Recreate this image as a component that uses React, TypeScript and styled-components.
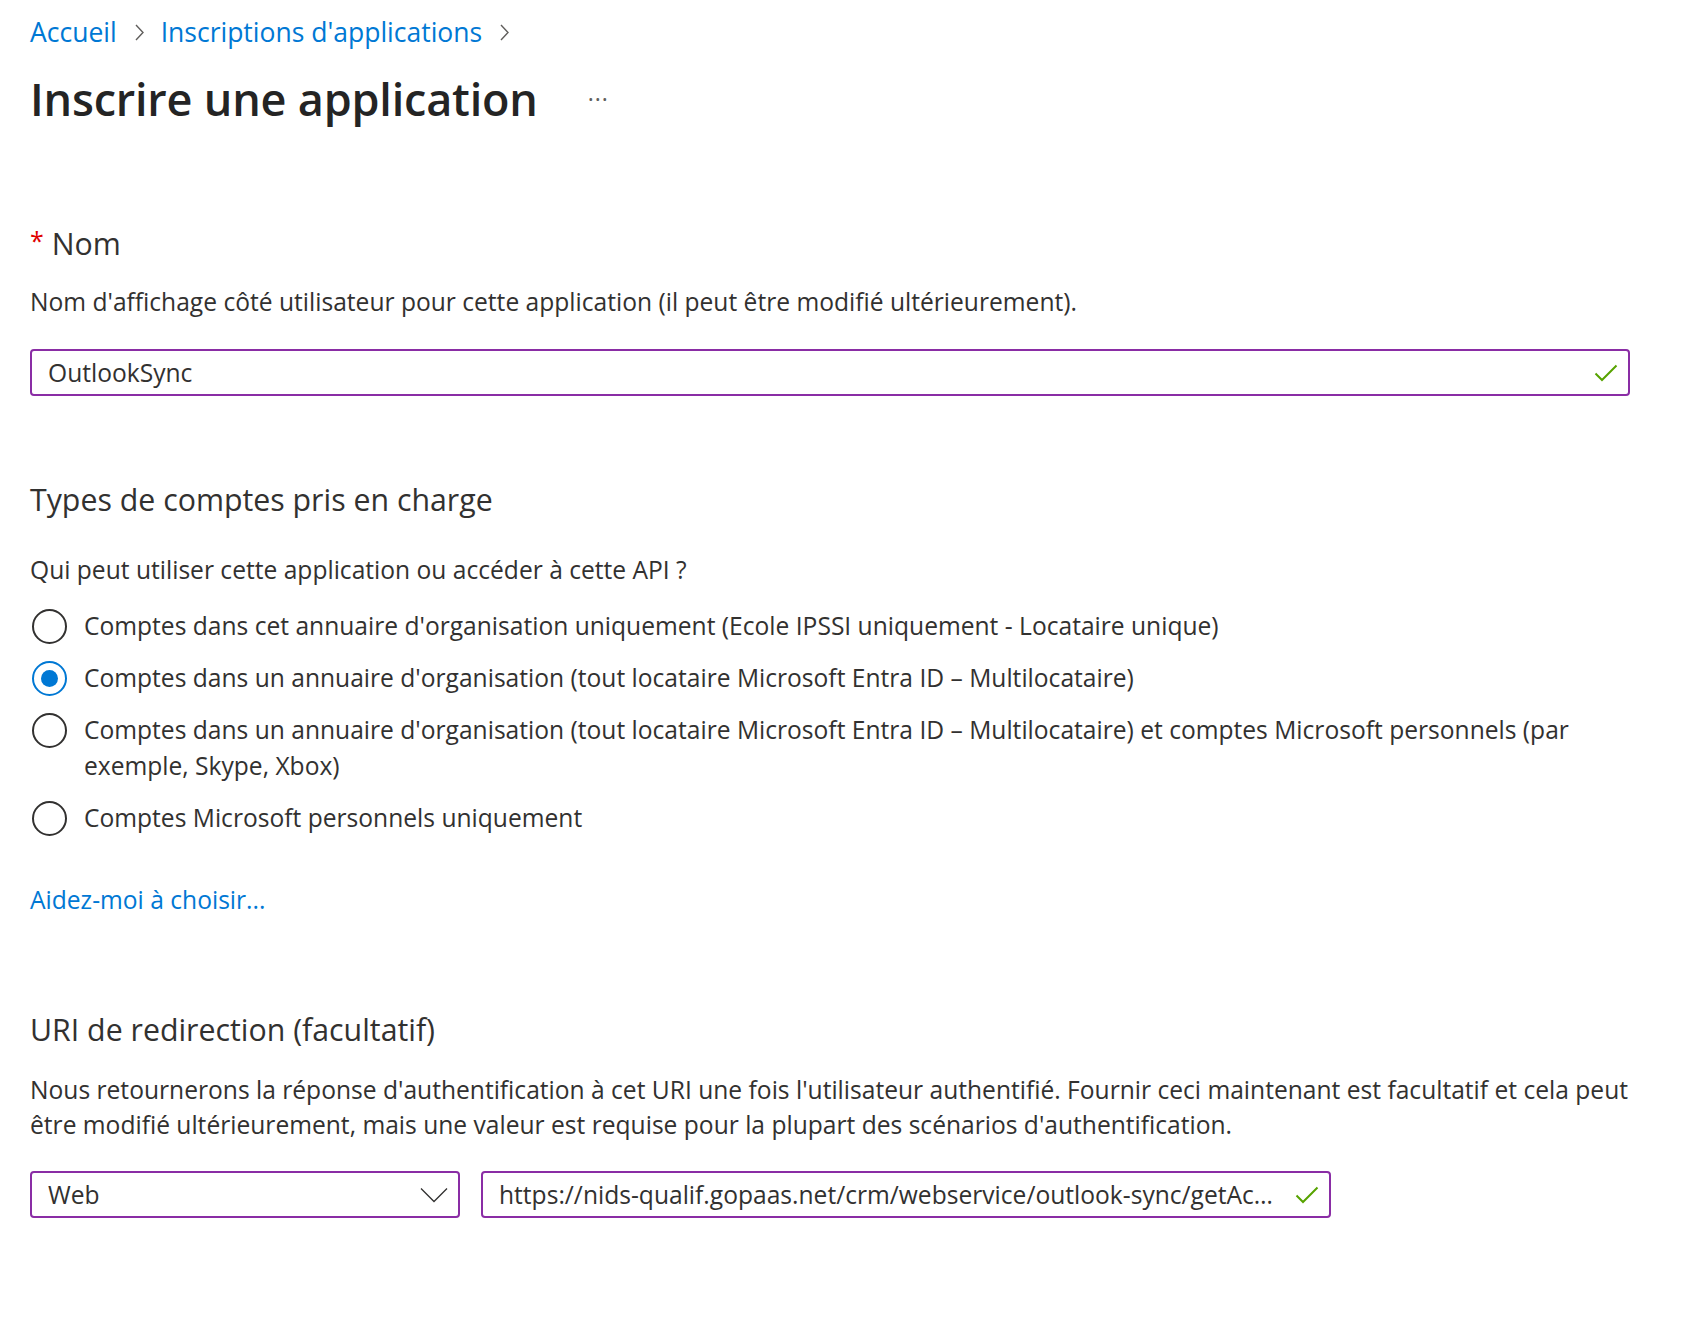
import React from 'react'
import styled, { createGlobalStyle } from 'styled-components'

const GlobalStyle = createGlobalStyle`
  html, body {
    margin: 0;
    padding: 0;
    background: #ffffff;
  }
  body {
    font-family: "Segoe UI", "Open Sans", "Noto Sans", sans-serif;
    color: #323130;
  }
`

const Page = styled.div`
  padding: 14px 30px 60px 30px;
  width: 1600px;
`

const Breadcrumb = styled.nav`
  display: flex;
  align-items: center;
  height: 36px;
  font-size: 26.5px;
  line-height: 36px;
`

const Crumb = styled.a`
  color: #0078d4;
  text-decoration: none;
  cursor: pointer;
`

const CrumbSep = styled.span`
  display: inline-flex;
  align-items: center;
  margin: 0 17px 0 18px;
`

const TitleRow = styled.div`
  display: flex;
  align-items: center;
  margin-top: 19px;
  height: 60px;
`

const Title = styled.h1`
  margin: 0;
  font-size: 45px;
  font-weight: 600;
  line-height: 60px;
  color: #242424;
  letter-spacing: -0.2px;
`

const More = styled.span`
  margin-left: 50px;
  font-size: 23px;
  color: #605e5c;
  letter-spacing: 1px;
`

const SectionLabel = styled.h2<{ $top: number }>`
  margin: ${p => p.$top}px 0 0 0;
  height: 40px;
  font-size: 30.3px;
  font-weight: 400;
  line-height: 40px;
  color: #323130;
  white-space: nowrap;
`

const Required = styled.span`
  color: #e00000;
  font-size: 25px;
  margin-right: 8px;
  position: relative;
  top: -5px;
`

const Text = styled.p<{ $top: number }>`
  margin: ${p => p.$top}px 0 0 0;
  font-size: 24.6px;
  line-height: 32px;
`

const Field = styled.div<{ $width: number }>`
  box-sizing: border-box;
  display: flex;
  align-items: center;
  width: ${p => p.$width}px;
  height: 47px;
  border: 2px solid #8a2da5;
  border-radius: 4px;
  padding: 0 10px 0 16px;
  font-size: 24.6px;
  background: #fff;
`

const FieldValue = styled.span`
  flex: 1;
  min-width: 0;
  white-space: nowrap;
  overflow: hidden;
  text-overflow: ellipsis;
`

const NameField = styled(Field)`
  margin-top: 31px;
`

const RadioList = styled.div`
  display: flex;
  flex-direction: column;
  gap: 16px;
  margin-top: 22px;
`

const RadioRow = styled.label`
  display: flex;
  align-items: flex-start;
  font-size: 24.6px;
  line-height: 36px;
  cursor: pointer;
`

const RadioCircle = styled.span<{ $checked: boolean }>`
  box-sizing: border-box;
  flex: none;
  width: 35px;
  height: 35px;
  margin-top: 0.5px;
  margin-left: 2px;
  margin-right: 17px;
  border-radius: 50%;
  border: 2px solid ${p => (p.$checked ? '#0078d4' : '#323130')};
  display: flex;
  align-items: center;
  justify-content: center;
  &::after {
    content: '';
    display: ${p => (p.$checked ? 'block' : 'none')};
    width: 17px;
    height: 17px;
    border-radius: 50%;
    background: #0078d4;
  }
`

const HelpLink = styled.a`
  display: block;
  margin-top: 48px;
  font-size: 24.6px;
  line-height: 32px;
  color: #0078d4;
  text-decoration: none;
  cursor: pointer;
`

const Description = styled.p`
  margin: 21.5px 0 0 0;
  font-size: 24.6px;
  line-height: 35px;
  width: 1650px;
`

const RedirectRow = styled.div`
  display: flex;
  gap: 21px;
  margin-top: 29.5px;
`

const Check = () => (
  <svg width="24" height="18" viewBox="0 0 24 18" fill="none">
    <polyline points="1.5,9.5 8,16 22.5,1.5" stroke="#57a300" strokeWidth="2" />
  </svg>
)

const Chevron = () => (
  <svg width="28" height="16" viewBox="0 0 28 16" fill="none">
    <polyline points="1,1.5 14,14.5 27,1.5" stroke="#323130" strokeWidth="1.3" />
  </svg>
)

const CrumbChevron = () => (
  <svg width="9" height="17" viewBox="0 0 9 17" fill="none">
    <polyline points="1,1 8,8.5 1,16" stroke="#605e5c" strokeWidth="1.4" />
  </svg>
)

const accountTypes = [
  "Comptes dans cet annuaire d'organisation uniquement (Ecole IPSSI uniquement - Locataire unique)",
  "Comptes dans un annuaire d'organisation (tout locataire Microsoft Entra ID – Multilocataire)",
  "Comptes dans un annuaire d'organisation (tout locataire Microsoft Entra ID – Multilocataire) et comptes Microsoft personnels (par exemple, Skype, Xbox)",
  'Comptes Microsoft personnels uniquement',
]

function App() {
  const selected = 1

  return (
    <>
      <GlobalStyle />
      <Page>
        <Breadcrumb>
          <Crumb>Accueil</Crumb>
          <CrumbSep><CrumbChevron /></CrumbSep>
          <Crumb>Inscriptions d'applications</Crumb>
          <CrumbSep><CrumbChevron /></CrumbSep>
        </Breadcrumb>

        <TitleRow>
          <Title>Inscrire une application</Title>
          <More>···</More>
        </TitleRow>

        <SectionLabel $top={95}>
          <Required>*</Required>Nom
        </SectionLabel>
        <Text $top={22}>
          Nom d'affichage côté utilisateur pour cette application (il peut être modifié ultérieurement).
        </Text>
        <NameField $width={1600}>
          <FieldValue>OutlookSync</FieldValue>
          <Check />
        </NameField>

        <SectionLabel $top={84}>Types de comptes pris en charge</SectionLabel>
        <Text $top={34}>Qui peut utiliser cette application ou accéder à cette API ?</Text>
        <RadioList>
          {accountTypes.map((label, i) => (
            <RadioRow key={i}>
              <RadioCircle $checked={i === selected} />
              <span>{label}</span>
            </RadioRow>
          ))}
        </RadioList>

        <HelpLink>Aidez-moi à choisir...</HelpLink>

        <SectionLabel $top={94}>URI de redirection (facultatif)</SectionLabel>
        <Description>
          Nous retournerons la réponse d'authentification à cet URI une fois l'utilisateur authentifié. Fournir ceci maintenant est facultatif et cela peut être modifié ultérieurement, mais une valeur est requise pour la plupart des scénarios d'authentification.
        </Description>
        <RedirectRow>
          <Field $width={430}>
            <FieldValue>Web</FieldValue>
            <Chevron />
          </Field>
          <Field $width={850}>
            <FieldValue>https://nids-qualif.gopaas.net/crm/webservice/outlook-sync/getAc…</FieldValue>
            <Check />
          </Field>
        </RedirectRow>
      </Page>
    </>
  )
}

export default App
